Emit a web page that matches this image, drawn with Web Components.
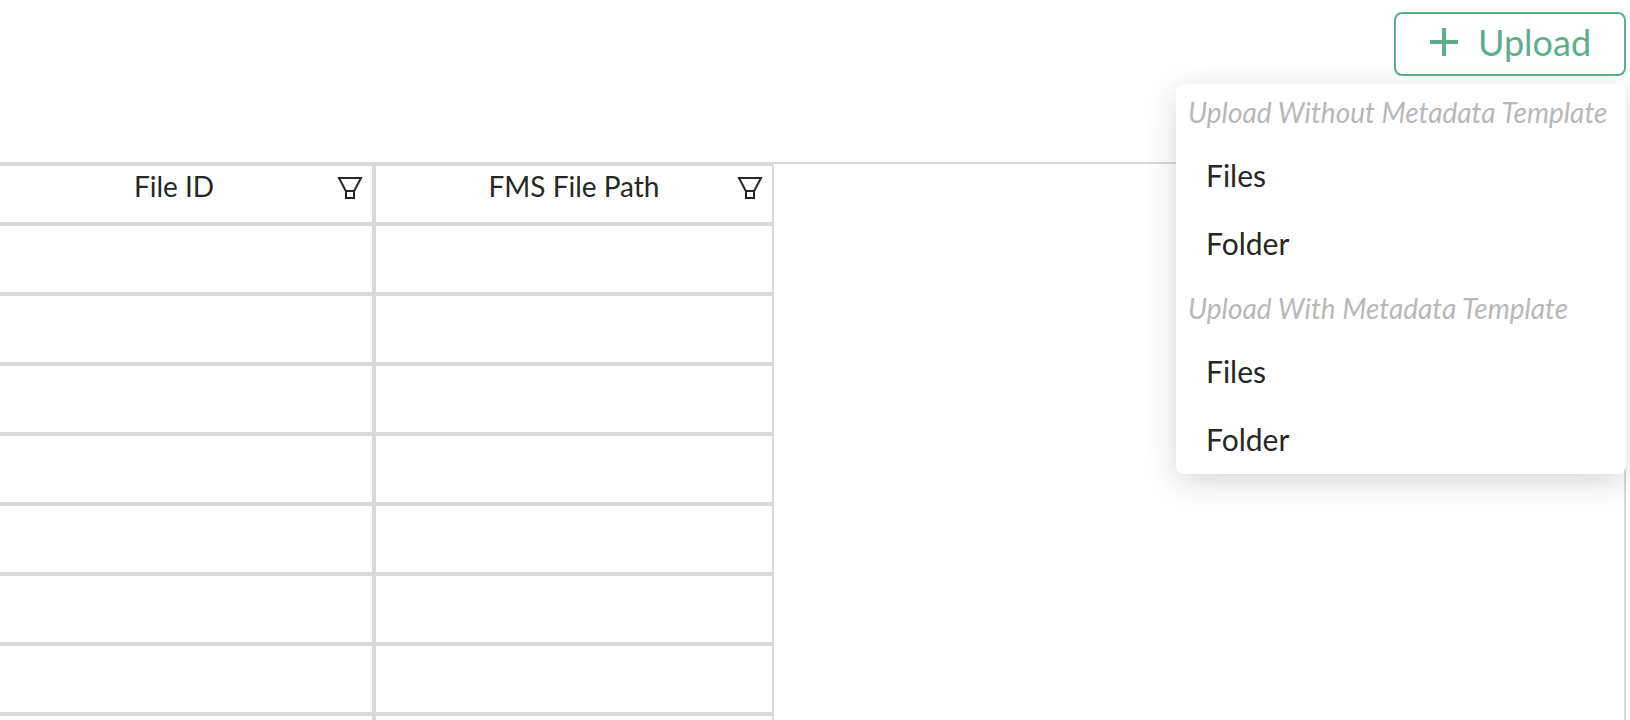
<!DOCTYPE html>
<html lang="en">
<head>
<meta charset="utf-8">
<title>Files</title>
<style>
  html, body { height: 100%; }
  body {
    margin: 0;
    overflow: hidden;
    background: #fff;
    color: #262626;
    font-family: Lato, "Open Sans", sans-serif;
    font-size: 28px;
  }
</style>
</head>
<body>
<file-page>
  <upload-menu slot="actions" label="Upload">
    <menu-group heading="Upload Without Metadata Template">
      <menu-item>Files</menu-item>
      <menu-item>Folder</menu-item>
    </menu-group>
    <menu-group heading="Upload With Metadata Template">
      <menu-item>Files</menu-item>
      <menu-item>Folder</menu-item>
    </menu-group>
  </upload-menu>
  <file-grid columns="File ID,FMS File Path" rows="8"></file-grid>
</file-page>

<script>
class Base extends HTMLElement {
  constructor() {
    super();
    this.attachShadow({ mode: 'open' });
  }
  connectedCallback() { this.shadowRoot.innerHTML = this.render(); }
}

customElements.define('file-page', class extends Base {
  render() {
    return `<style>
      :host { display: flex; flex-direction: column; height: 100vh; box-sizing: border-box; padding: 12px 4px 0 0; }
      header { display: flex; justify-content: flex-end; margin-bottom: 86px; }
      main { flex: 1; min-height: 0; display: flex; }
    </style>
    <header><slot name="actions"></slot></header>
    <main><slot></slot></main>`;
  }
});

customElements.define('upload-menu', class extends Base {
  render() {
    return `<style>
      :host { display: block; position: relative; }
      .trigger {
        display: flex; align-items: center; gap: 20px;
        min-width: 232px; height: 64px; padding: 0 30px 4px 34px; box-sizing: border-box;
        border: 2px solid #5fae8b; border-radius: 8px;
        background: #fff; color: #5fae8b;
        font: inherit; font-size: 36px; line-height: 44px;
      }
      svg { display: block; width: 28px; height: 28px; }
      .panel {
        position: absolute; z-index: 1; top: 72px; right: 0;
        width: 450px; box-sizing: border-box; padding: 4px 0 1px;
        display: flex; flex-direction: column; gap: 7px;
        background: #fff; border-radius: 8px;
        box-shadow: 0 8px 32px rgba(0,0,0,.16);
      }
    </style>
    <button class="trigger" type="button" aria-haspopup="menu" aria-expanded="true">
      <svg viewBox="0 0 28 28" aria-hidden="true"><path d="M12 0h4v12h12v4H16v12h-4V16H0v-4h12z" fill="currentColor"/></svg>
      <span>${this.getAttribute('label')}</span>
    </button>
    <div class="panel" role="menu"><slot></slot></div>`;
  }
});

customElements.define('menu-group', class extends Base {
  render() {
    return `<style>
      :host { display: block; }
      .heading {
        padding: 0 12px 4px; color: #b8b8b8; white-space: nowrap;
        font-size: 28px; line-height: 49px; font-style: italic;
      }
    </style>
    <div role="group" aria-labelledby="h">
      <div class="heading" id="h">${this.getAttribute('heading')}</div>
      <slot></slot>
    </div>`;
  }
});

customElements.define('menu-item', class extends Base {
  render() {
    return `<style>
      :host { display: block; }
      button {
        display: block; width: 100%; padding: 0 30px; border: 0;
        background: none; color: inherit; text-align: left;
        font: inherit; font-size: 30px; line-height: 68px;
      }
    </style>
    <button type="button" role="menuitem"><slot></slot></button>`;
  }
});

customElements.define('filter-button', class extends Base {
  render() {
    return `<style>
      :host { display: block; }
      button { display: block; padding: 0; border: 0; background: none; color: inherit; }
      svg { display: block; width: 26px; height: 24px; }
    </style>
    <button type="button" aria-label="${this.getAttribute('label')}">
      <svg viewBox="0 0 26 24" fill="none" stroke="currentColor" stroke-width="2" aria-hidden="true">
        <path d="M2 2h22L17.2 15H8.8zM9 15v7h8v-7z"/>
      </svg>
    </button>`;
  }
});

customElements.define('file-grid', class extends Base {
  render() {
    const names = this.getAttribute('columns').split(',');
    const rows = Number(this.getAttribute('rows'));
    const head = names.map(n => `<th scope="col"><div><span>${n}</span><filter-button label="Filter ${n}"></filter-button></div></th>`).join('');
    const row = `<tr>${names.map(() => '<td></td>').join('')}</tr>`;
    return `<style>
      :host {
        display: block; flex: 1; min-width: 0; overflow: hidden;
        border: solid #d9d9d9; border-width: 2px 2px 0 0;
      }
      /* the first column is partly scrolled out on the left */
      table { width: 800px; margin-left: -26px; table-layout: fixed; border-collapse: separate; border-spacing: 0; }
      th, td { box-sizing: border-box; padding: 0; border: 2px solid #d9d9d9; }
      th { height: 60px; font-weight: 400; vertical-align: top; }
      td { height: 70px; }
      div { display: grid; padding: 0 9px; line-height: 40px; }
      span, filter-button { grid-area: 1 / 1; }
      span { justify-self: center; }
      filter-button { justify-self: end; margin-top: 10px; }
    </style>
    <table>
      <thead><tr>${head}</tr></thead>
      <tbody>${row.repeat(rows)}</tbody>
    </table>`;
  }
});
</script>
</body>
</html>
